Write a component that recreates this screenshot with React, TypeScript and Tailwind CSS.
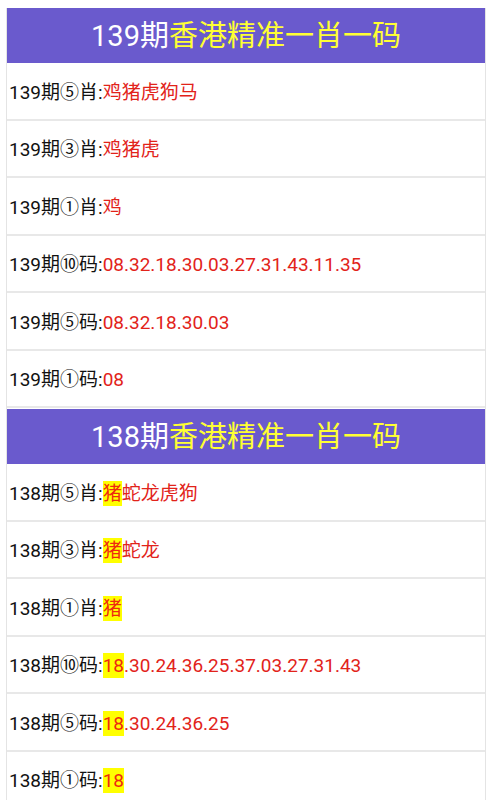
import React from 'react';

type Row = { label: string; hit?: string; rest: string };

type Section = { issue: string; rows: Row[] };

const sections: Section[] = [
  {
    issue: '139',
    rows: [
      { label: '139期⑤肖:', rest: '鸡猪虎狗马' },
      { label: '139期③肖:', rest: '鸡猪虎' },
      { label: '139期①肖:', rest: '鸡' },
      { label: '139期⑩码:', rest: '08.32.18.30.03.27.31.43.11.35' },
      { label: '139期⑤码:', rest: '08.32.18.30.03' },
      { label: '139期①码:', rest: '08' },
    ],
  },
  {
    issue: '138',
    rows: [
      { label: '138期⑤肖:', hit: '猪', rest: '蛇龙虎狗' },
      { label: '138期③肖:', hit: '猪', rest: '蛇龙' },
      { label: '138期①肖:', hit: '猪', rest: '' },
      { label: '138期⑩码:', hit: '18', rest: '.30.24.36.25.37.03.27.31.43' },
      { label: '138期⑤码:', hit: '18', rest: '.30.24.36.25' },
      { label: '138期①码:', hit: '18', rest: '' },
    ],
  },
];

const font = "font-['Roboto','Noto_Sans_CJK_SC',sans-serif]";

export default function App() {
  return (
    <div className={`min-h-[800px] bg-white pt-[8px] px-[6px] ${font}`}>
      <div className="border-x border-[#e4e4e4]">
        {sections.map((s, i) => (
          <div key={s.issue} className={i > 0 ? 'pt-[1px]' : ''}>
            <div className="flex h-[55px] items-center justify-center bg-[#6a5acd] pt-[1px] text-[29px] leading-none">
              <span className="text-white">{s.issue}期</span>
              <span className="text-[#ffff33]">香港精准一肖一码</span>
            </div>
            {s.rows.map((r) => (
              <div
                key={r.label}
                className="flex h-[57.5px] items-center border-b-2 border-[#e8e8e8] pl-[2px] pt-[3px] text-[19px] leading-none text-[#111]"
              >
                <span>{r.label}</span>
                {r.hit && (
                  <span className="inline-block h-[25px] bg-[#ffff00] leading-[25px] text-[#ee2a10]">
                    {r.hit}
                  </span>
                )}
                <span className="text-[#e2231a]">{r.rest}</span>
              </div>
            ))}
          </div>
        ))}
      </div>
    </div>
  );
}
